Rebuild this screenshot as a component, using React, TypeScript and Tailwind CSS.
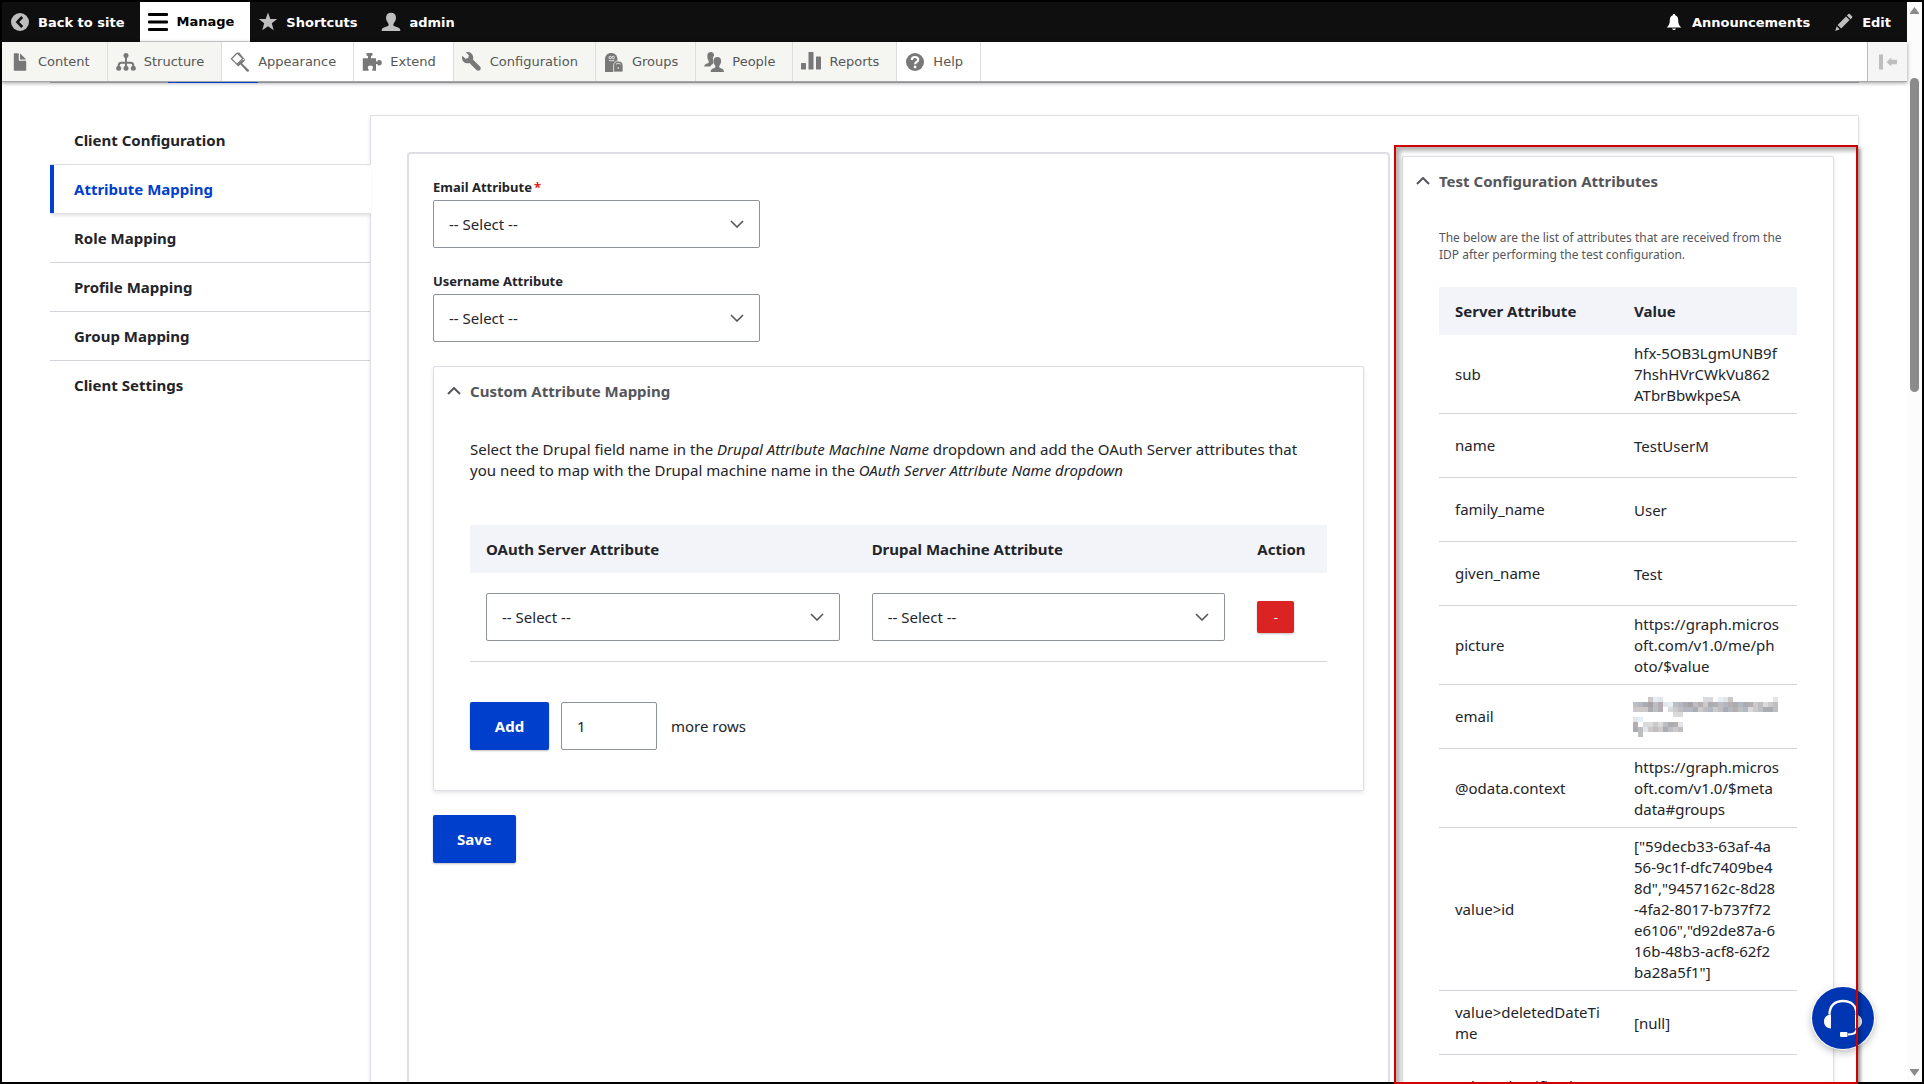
import type { ReactNode } from "react";

function Icon({ children, className = "" }: { children: ReactNode; className?: string }) {
  return (
    <svg viewBox="0 0 20 20" aria-hidden="true" fill="currentColor" className={`size-5 shrink-0 ${className}`}>
      {children}
    </svg>
  );
}

const icons = {
  back: (
    <>
      <circle cx="10" cy="10" r="9" />
      <path d="M12.2 5 7.4 10l4.8 5" fill="none" stroke="#0f0f0f" strokeWidth="2.6" />
    </>
  ),
  menu: (
    <>
      <rect x="0" y="1" width="20" height="3" rx="1" />
      <rect x="0" y="8.5" width="20" height="3" rx="1" />
      <rect x="0" y="16" width="20" height="3" rx="1" />
    </>
  ),
  star: <path d="M10 .6l2.3 6.3 6.9.2-5.4 4.2 1.9 6.9L10 14.3l-5.700 3.900 1.900-6.900L.8 7.100l6.900-.2z" />,
  user: (
    <path d="M10 .8c3 0 5 1.900 5 5 0 2.500-1.400 4.400-2.300 5.600-.6.9-.5 2 .3 2.600 1.300.9 6 1.200 6.300 4v1H.7v-1c.3-2.800 5-3.100 6.300-4 .8-.6.9-1.700.3-2.600C6.400 10.200 5 8.300 5 5.800c0-3.100 2-5 5-5z" />
  ),
  bell: (
    <path d="M10 2c.8 0 1.200.5 1.200 1.200 2 .7 3 2.600 3 5 0 3.600 1 5.500 3.200 7.300H2.600C4.800 13.700 5.800 11.800 5.800 8.200c0-2.400 1-4.300 3-5C8.800 2.500 9.200 2 10 2zM8.200 16.500h3.600c-.2 1-.9 1.500-1.800 1.500s-1.600-.5-1.800-1.500z" />
  ),
  pencil: (
    <path d="M14.200 2.200c.5-.5 1.100-.6 1.600-.1l2.200 2.200c.5.5.4 1.100-.1 1.600L16.600 7.200l-3.700-3.700zM12 4.500l3.600 3.600-8.400 8.400-3.600-3.600zM2.700 14.300l3 3L1.200 19z" />
  ),
  file: (
    <path d="M15.600 8.800H9.400a.6.6 0 0 1-.6-.6V1.900a.6.6 0 0 0-.6-.6H4.400a.6.6 0 0 0-.6.6v16.200c0 .4.300.6.6.6h11.200c.4 0 .6-.3.6-.6V9.400a.6.6 0 0 0-.6-.6zM10.600 7.500h5c.4 0 .4-.2.200-.4l-5.400-5.400c-.2-.2-.4-.2-.4.200v5c0 .4.200.6.6.6z" />
  ),
  chart: (
    <>
      <circle cx="10" cy="3.600" r="2.500" />
      <circle cx="2.700" cy="16.300" r="2.500" />
      <circle cx="10" cy="16.300" r="2.500" />
      <circle cx="17.300" cy="16.300" r="2.500" />
      <path d="M10 4v12M2.700 16v-2.500c0-1.700.8-2.700 2.700-2.700h9.200c1.900 0 2.700 1 2.700 2.700V16" fill="none" stroke="currentColor" strokeWidth="2" />
    </>
  ),
  brush: (
    <>
      <path d="M7.200 1 1.400 6.700l5.600 5.600 5.800-5.700z" fill="none" stroke="currentColor" strokeWidth="1.200" />
      <path d="M7.600 1.200 10.400 4l4.200 4-2.600.2L6.800 13l1.400 1.400 2.400-2 6.200 7c1.300 1.200 3-.4 1.900-1.700l-6.600-6.200 3.200-3.400L9 .2z" />
    </>
  ),
  puzzle: (
    <path d="M4.500 1h6v2.400L9 4v2.200h5v3.200h1.200c.4-1 1.100-1.500 2-1.500 1.600 0 2.600 1 2.600 2.800s-1 2.800-2.600 2.800c-.9 0-1.600-.5-2-1.500H14v6.700h-3.800v-1.500c.7-.5.8-.9.8-1.500 0-1.300-1.100-2.200-2.600-2.200s-2.600.9-2.600 2.200c0 .6.200 1 .8 1.500v1.500H.8V6.200H6V4l-1.500-.6z" />
  ),
  wrench: (
    <path
      transform="scale(1.250)"
      d="M14.416 11.586l-.01-.008v-.001l-5.656-5.656c.15-.449.252-.921.252-1.421 0-2.485-2.016-4.500-4.502-4.500-.505 0-.981.102-1.434.255l2.431 2.431-.588 2.196-2.196.588-2.445-2.445c-.162.464-.268.956-.268 1.475 0 2.486 2.014 4.500 4.500 4.500.5 0 .972-.102 1.421-.251l5.667 5.665c.781.781 2.047.781 2.828 0s.781-2.047 0-2.828z"
    />
  ),
  groups: (
    <>
      <path d="M1 20V7.200C1 3.500 3.600 1 7.200 1s6.200 2.500 6.200 6.200V20z" />
      <g fill="none" stroke="#f5f6f1" strokeWidth=".9">
        <circle cx="6.200" cy="5.500" r="1.200" />
        <circle cx="9.200" cy="5.500" r="1.200" />
        <path d="M5 8.300c1.500.6 3.900.6 5.400 0" />
      </g>
      <path d="M9.600 20v-6.500c0-2.800 1.900-4.500 4.700-4.500s4.700 1.700 4.700 4.500V20z" stroke="#f5f6f1" strokeWidth=".8" />
      <path d="M12 12.200c1.400-.9 3.200-.9 4.600 0" fill="none" stroke="#f5f6f1" strokeWidth=".9" />
      <circle cx="14.300" cy="16" r=".8" fill="#f5f6f1" />
    </>
  ),
  people: (
    <>
      <path d="M6.800 0c2 0 3.300 1.400 3.300 3.600C8.700 5 8.500 7.400 9.300 9.500c.3.900-.3 1.300-.2 2.300-1 .6-2 1-2.700 2.700H.3c-.1-2.600 2.900-2.700 4-3.500.7-.6.7-1.400.2-2.200C3.800 7.700 3.300 6 3.300 3.800 3.300 1.400 4.700 0 6.800 0z" />
      <path d="M13.300 5c2.400 0 3.800 1.500 3.800 4 0 2-.9 3.500-1.600 4.600-.5.8-.3 1.700.3 2.200 1 .7 4 .8 4.100 3.700v.5H6.700v-.5c.1-2.900 3.100-3 4.100-3.700.6-.5.8-1.400.3-2.200-.7-1.100-1.600-2.600-1.600-4.600 0-2.500 1.400-4 3.800-4z" />
    </>
  ),
  bars: (
    <>
      <rect x="0" y="11" width="5" height="6.500" rx=".6" />
      <rect x="7.500" y="0" width="5" height="17.500" rx=".6" />
      <rect x="15" y="4.500" width="5" height="13" rx=".6" />
    </>
  ),
  help: (
    <>
      <circle cx="10" cy="10" r="9" />
      <path d="M6.800 8c0-2 1.400-3 3.200-3s3.200 1 3.200 2.700c0 2.300-3.100 2.200-3.100 4.500" fill="none" stroke="#fff" strokeWidth="2.200" />
      <circle cx="10.100" cy="15" r="1.400" fill="#fff" />
    </>
  ),
};

type BarItem = { label: string; icon: ReactNode; tone: string };

const topItems: BarItem[] = [
  { label: "Back to site", icon: icons.back, tone: "text-[#bebebe]" },
  { label: "Manage", icon: icons.menu, tone: "text-black" },
  { label: "Shortcuts", icon: icons.star, tone: "text-[#bebebe]" },
  { label: "admin", icon: icons.user, tone: "text-[#bebebe]" },
];

const topRightItems: BarItem[] = [
  { label: "Announcements", icon: icons.bell, tone: "text-white" },
  { label: "Edit", icon: icons.pencil, tone: "text-[#bebebe]" },
];

const trayItems = [
  { label: "Content", icon: icons.file, shaded: true },
  { label: "Structure", icon: icons.chart, shaded: true },
  { label: "Appearance", icon: icons.brush, shaded: false },
  { label: "Extend", icon: icons.puzzle, shaded: false },
  { label: "Configuration", icon: icons.wrench, shaded: true },
  { label: "Groups", icon: icons.groups, shaded: true },
  { label: "People", icon: icons.people, shaded: true },
  { label: "Reports", icon: icons.bars, shaded: true },
  { label: "Help", icon: icons.help, shaded: false },
];

const tabs = [
  "Client Configuration",
  "Attribute Mapping",
  "Role Mapping",
  "Profile Mapping",
  "Group Mapping",
  "Client Settings",
];

const attributes: { name: string; value: string }[] = [
  { name: "sub", value: "hfx-5OB3LgmUNB9f\n7hshHVrCWkVu862\nATbrBbwkpeSA" },
  { name: "name", value: "TestUserM" },
  { name: "family_name", value: "User" },
  { name: "given_name", value: "Test" },
  { name: "picture", value: "https://graph.micros\noft.com/v1.0/me/ph\noto/$value" },
  { name: "email", value: "" },
  { name: "@odata.context", value: "https://graph.micros\noft.com/v1.0/$meta\ndata#groups" },
  {
    name: "value>id",
    value:
      '["59decb33-63af-4a\n56-9c1f-dfc7409be4\n8d","9457162c-8d28\n-4fa2-8017-b737f72\ne6106","d92de87a-6\n16b-48b3-acf8-62f2\nba28a5f1"]',
  },
  { name: "value>deletedDateTi\nme", value: "[null]" },
  { name: "value>classification", value: "[null]" },
];

/* Grey levels of the redacted address, one character per 5px block; "." is empty. */
const mosaicRows = [
  "...cfe........dd.fec........e",
  "b9a7b8efb9a7b8ca8b98a9a8cbdcb",
  "cccab8.dcb99acb9cba98b9dcbaab",
  "........dd...................",
  "ef...........................",
  "8.ddcdba8e...................",
  "abecbcabcb...................",
  ".b...........................",
];
const mosaicShades: Record<string, string> = {
  "7": "#a5a3a6",
  "8": "#b4aeb0",
  "9": "#b3b7bf",
  a: "#a9adb2",
  b: "#bcbec2",
  c: "#cdc9c8",
  d: "#d8dadc",
  e: "#e3e5e8",
  f: "#e6eef6",
};

function Redacted() {
  return (
    <svg
      width="145"
      height="40"
      viewBox="0 0 29 8"
      shapeRendering="crispEdges"
      role="img"
      aria-label="Hidden address"
      className="-ml-px block"
    >
      {mosaicRows.flatMap((row, y) =>
        row
          .split("")
          .map((c, x) => (c === "." ? null : <rect key={`${x}-${y}`} x={x} y={y} width="1" height="1" fill={mosaicShades[c]} />)),
      )}
    </svg>
  );
}

function TopLink({ item }: { item: BarItem }) {
  const active = item.label === "Manage";
  return (
    <a
      href="#"
      className={`flex items-center gap-2 pr-4 pl-2 ${active ? "border-b border-[#d5d5d5] bg-white text-black" : "text-white"}`}
    >
      <Icon className={item.tone}>{item.icon}</Icon>
      {item.label}
    </a>
  );
}

function SelectBox({ id, label, className = "" }: { id: string; label?: string; className?: string }) {
  return (
    <div className={`relative ${className}`}>
      <select
        id={id}
        aria-label={label}
        className="h-12 w-full appearance-none rounded-[2px] border border-[#8e929c] bg-white px-[15px] text-[15px] text-[#232429]"
      >
        <option>-- Select --</option>
      </select>
      <svg
        viewBox="0 0 14 8"
        aria-hidden="true"
        className="pointer-events-none absolute top-5 right-4 h-2 w-[14px] fill-none stroke-[#55565b] stroke-[1.6]"
      >
        <path d="M1 1l6 6 6-6" />
      </svg>
    </div>
  );
}

function Panel({ title, children, className = "" }: { title: string; children: ReactNode; className?: string }) {
  return (
    <details open className={`rounded-[2px] border border-[#dedfe4] bg-white shadow-[0_2px_4px_rgba(0,0,0,0.1)] ${className}`}>
      <summary className="flex h-12 list-none items-center gap-[9px] px-[13px] font-bold text-[#55565b]">
        <svg viewBox="0 0 14 8" aria-hidden="true" className="h-2 w-[14px] fill-none stroke-[#55565b] stroke-2">
          <path d="M1 7l6-6 6 6" />
        </svg>
        {title}
      </summary>
      <div className="px-9 pt-6 pb-10">{children}</div>
    </details>
  );
}

export default function App() {
  return (
    <div className="relative flex h-screen overflow-hidden bg-white px-[2px] pt-[2px] font-['Noto_Sans',sans-serif] text-[15px] leading-[21px] text-[#232429]">
      <div className="pointer-events-none absolute inset-0 z-10 border-2 border-black" />

      <div className="flex min-w-0 flex-1 flex-col">
        <nav aria-label="Toolbar" className="flex h-10 shrink-0 justify-between bg-[#0f0f0f] font-['DejaVu_Sans',sans-serif] text-[13px] font-bold">
          <div className="flex">
            {topItems.map((item) => (
              <TopLink key={item.label} item={item} />
            ))}
          </div>
          <div className="flex">
            {topRightItems.map((item) => (
              <TopLink key={item.label} item={item} />
            ))}
          </div>
        </nav>

        <nav
          aria-label="Administration"
          className="relative flex h-10 shrink-0 border-b border-[#a6a6a6] bg-white font-['DejaVu_Sans',sans-serif] text-[13px] text-[#565656] shadow-[0_1px_4px_rgba(0,0,0,0.4)]"
        >
          {trayItems.map((item) => (
            <a
              key={item.label}
              href="#"
              className={`flex items-center gap-2 border-r border-[#dddddd] pr-[17px] pl-2 ${item.shaded ? "bg-[#f5f6f1]" : "bg-white"}`}
            >
              <Icon className="text-[#787878]">{item.icon}</Icon>
              {item.label}
            </a>
          ))}
          <button
            type="button"
            aria-label="Vertical orientation"
            className="ml-auto flex w-10 items-center justify-center border-l border-[#bbbbbb] bg-[#f5f5f5] text-[#bebebe]"
          >
            <Icon>
              <rect x="1" y="2.500" width="4" height="15" />
              <path d="M8.500 10l4.800-4.500v2.300H19v4.400h-5.700v2.300z" />
            </Icon>
          </button>
        </nav>

        <div className="relative mx-12 flex h-px shrink-0 bg-[#919297]">
          <div className="ml-[118px] w-[90px] bg-[#003ecc]" />
        </div>

        <main className="mx-12 mt-8 flex min-h-0 flex-1">
          <nav aria-label="Sections" className="w-80 shrink-0 pt-px">
            <ul>
              {tabs.map((tab) => {
                const active = tab === "Attribute Mapping";
                const last = tab === "Client Settings";
                return (
                  <li
                    key={tab}
                    className={
                      active
                        ? "relative -mt-px -mr-px border-y border-[#dedfe4] bg-white shadow-[0_3px_3px_-1px_rgba(0,0,0,0.1)]"
                        : last
                          ? ""
                          : "border-b border-[#d3d4d9]"
                    }
                  >
                    <a
                      href="#"
                      className={`flex h-12 items-center font-bold ${
                        active ? "border-l-4 border-[#003ecc] pl-5 text-[#003ecc]" : "pl-6"
                      }`}
                    >
                      {tab}
                    </a>
                  </li>
                );
              })}
            </ul>
          </nav>

          <section className="flex min-w-0 flex-1 gap-1 rounded-tr-[2px] border border-b-0 border-[#dedfe4] pl-9 shadow-[0_2px_4px_rgba(0,0,0,0.1)]">
            <form className="mt-9 min-w-0 flex-1 rounded-t border-2 border-b-0 border-[#dedfe4] p-6">
              <label htmlFor="email" className="block pb-1 text-[13px] leading-[18px] font-bold">
                Email Attribute<span className="ml-[2px] text-[#dc2323]">*</span>
              </label>
              <SelectBox id="email" className="mb-6 w-[327px]" />
              <label htmlFor="username" className="block pb-1 text-[13px] leading-[18px] font-bold">
                Username Attribute
              </label>
              <SelectBox id="username" className="mb-6 w-[327px]" />

              <Panel title="Custom Attribute Mapping">
                <p className="mb-11 pr-4">
                  Select the Drupal field name in the <em>Drupal Attribute Machine Name</em> dropdown and add the OAuth Server
                  attributes that you need to map with the Drupal machine name in the <em>OAuth Server Attribute Name dropdown</em>
                </p>
                <table className="w-full table-fixed text-left">
                  <thead>
                    <tr className="h-12 bg-[#f3f4f9]">
                      <th className="w-[45%] px-4">OAuth Server Attribute</th>
                      <th className="w-[45%] px-4">Drupal Machine Attribute</th>
                      <th className="pl-4">Action</th>
                    </tr>
                  </thead>
                  <tbody>
                    <tr className="border-b border-[#d3d4d9]">
                      <td className="px-4 py-5">
                        <SelectBox id="server-attribute" label="OAuth Server Attribute" />
                      </td>
                      <td className="px-4 py-5">
                        <SelectBox id="machine-attribute" label="Drupal Machine Attribute" />
                      </td>
                      <td className="pl-4">
                        <button
                          type="button"
                          className="block h-8 w-[37px] rounded-[2px] bg-[#dc2323] text-[13px] text-white shadow-[0_1px_2px_rgba(0,0,0,0.25)]"
                        >
                          -
                        </button>
                      </td>
                    </tr>
                  </tbody>
                </table>
                <div className="mt-10 flex items-center">
                  <button type="button" className="h-12 min-w-[79px] rounded-[2px] bg-[#003ecc] px-5 font-bold text-white shadow-[0_1px_2px_rgba(0,0,0,0.25)]">
                    Add
                  </button>
                  <input
                    id="rows"
                    type="text"
                    defaultValue="1"
                    className="ml-3 h-12 w-24 rounded-[2px] border border-[#8e929c] px-[15px]"
                  />
                  <label htmlFor="rows" className="ml-[14px]">
                    more rows
                  </label>
                </div>
              </Panel>

              <button type="submit" className="mt-6 h-12 rounded-[2px] bg-[#003ecc] px-6 font-bold text-white shadow-[0_1px_2px_rgba(0,0,0,0.25)]">
                Save
              </button>
            </form>

            <aside className="relative mt-[29px] w-[464px] shrink-0">
              <div className="h-full overflow-hidden pt-[11px] pr-6 pl-2">
                <Panel title="Test Configuration Attributes">
                  <p className="mb-6 text-xs leading-[17px] text-[#55565b]">
                    The below are the list of attributes that are received from the IDP after performing the test configuration.
                  </p>
                  <table className="w-full table-fixed text-left">
                    <thead>
                      <tr className="h-12 bg-[#f3f4f9]">
                        <th className="px-4">Server Attribute</th>
                        <th className="px-4">Value</th>
                      </tr>
                    </thead>
                    <tbody>
                      {attributes.map((row) => (
                        <tr key={row.name} className="h-16 border-b border-[#d3d4d9] whitespace-pre">
                          <td className="py-2 pl-4">{row.name}</td>
                          <td className="pt-2 pb-[7px] pl-4">{row.name === "email" ? <Redacted /> : row.value}</td>
                        </tr>
                      ))}
                    </tbody>
                  </table>
                </Panel>
              </div>
              <div className="pointer-events-none absolute inset-0 z-20 border-2 border-[#d00000] shadow-[3px_3px_3px_rgba(0,0,0,0.3),inset_4px_4px_4px_rgba(0,0,0,0.3)]" />
            </aside>
          </section>
        </main>
      </div>

      <div aria-hidden="true" className="flex w-[15px] shrink-0 flex-col items-center justify-between bg-[#fcfcfc] pt-[5px] pb-2">
        <svg viewBox="0 0 9 7" className="h-[7px] w-[9px] shrink-0 fill-[#8b8b8b]">
          <path d="M4.500 0L9 6v1H0V6z" />
        </svg>
        <div className="mt-16 mb-auto h-[314px] w-[9px] rounded-full bg-[#8b8b8b]" />
        <svg viewBox="0 0 9 7" className="h-[7px] w-[9px] shrink-0 fill-[#8b8b8b]">
          <path d="M4.500 7L9 1V0H0v1z" />
        </svg>
      </div>

      <button
        type="button"
        aria-label="Support"
        className="absolute right-[50px] bottom-[35px] z-10 flex size-[62px] items-center justify-center rounded-full bg-[#0036b1] shadow-[0_0_0_1px_#fff,0_3px_8px_rgba(0,0,0,0.3)]"
      >
        <svg viewBox="0 0 38 38" aria-hidden="true" className="size-[38px]">
          <path d="M5.500 15.500C5.500 6.500 11 2 19 2s13.500 4.500 13.500 13.500" fill="none" stroke="#fff" strokeWidth="2.400" />
          <path d="M7 15.500v14C3 29.500 0 26.500 0 22.500s3-7 7-7zM31 15.500v14c4 0 7-3 7-7s-3-7-7-7z" fill="#fff" />
          <path d="M33 29c0 4-2.500 6.500-9 6.500" fill="none" stroke="#fff" strokeWidth="2" />
          <rect x="16" y="33" width="7.500" height="5" rx="1" fill="#fff" />
        </svg>
      </button>
    </div>
  );
}
